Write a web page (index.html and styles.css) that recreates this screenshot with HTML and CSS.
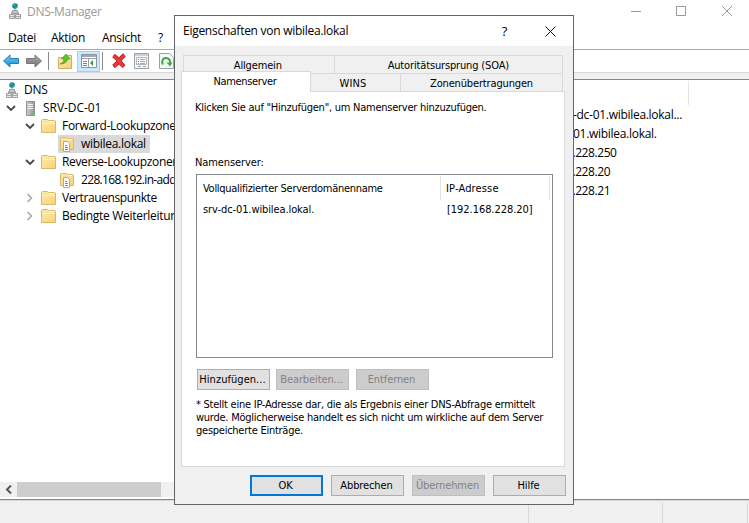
FILE: index.html
```html
<!DOCTYPE html>
<html lang="de">
<head>
<meta charset="utf-8">
<title>DNS-Manager</title>
<link rel="stylesheet" href="styles.css">
</head>
<body>
<svg width="0" height="0" class="defs">
  <defs>
    <linearGradient id="gold" x1="0" y1="0" x2="1" y2="1"><stop offset="0" stop-color="#ffeaaa"/><stop offset="1" stop-color="#f5d27a"/></linearGradient>
    <linearGradient id="steel" x1="0" y1="0" x2="1" y2="0"><stop offset="0" stop-color="#c9ced1"/><stop offset="1" stop-color="#8f969a"/></linearGradient>
    <linearGradient id="blue" x1="0" y1="0" x2="0" y2="1"><stop offset="0" stop-color="#6fd0f5"/><stop offset="1" stop-color="#1787d4"/></linearGradient>
    <linearGradient id="grey" x1="0" y1="0" x2="0" y2="1"><stop offset="0" stop-color="#aaa"/><stop offset="1" stop-color="#747474"/></linearGradient>
    <symbol id="dns" viewBox="0 0 12 16">
      <path d="M6 5v5M2.500 12V9.500h7V12" fill="none" stroke="#9a9ea2"/>
      <circle cx="6" cy="3" r="2.800" fill="#167fa9"/><path d="M4 1.200q2-1.400 3 .2L5.500 3 4 2.500zM6 4l2-1v1.500L6.500 5.700z" fill="#35b66a"/>
      <path d="M3.500 7.500h5v3h-5zM.5 11.500h5v4h-5zM6.500 11.500h5v4h-5z" fill="#e6e8ea" stroke="#9a9fa4"/>
      <path d="M1 13.500h4M7 13.500h4M4 9h4" stroke="#a4a9ad"/>
    </symbol>
    <symbol id="folder" viewBox="0 0 15 14">
      <path d="M.5 1.500q0-1 1-1h5l1 1h6q1 0 1 1v11H.5z" fill="url(#gold)" stroke="#dcb766"/>
      <path d="M8 2.500h5" stroke="#fffdf2"/><path d="M1 4.500h13" stroke="#fff1c0"/>
    </symbol>
    <symbol id="zone" viewBox="0 0 15 15">
      <path d="M.5 1.500q0-1 1-1h5l1 1h5q1 0 1 1v10H.5z" fill="url(#gold)" stroke="#dcb766"/>
      <path d="M8 2.500h4" stroke="#fffdf2"/>
      <path d="M3.500 4.500h4l2 2v8h-6z" fill="#fff" stroke="#a3abb2"/>
      <path d="M5 8.500h2M5 10.500h3M5 12.500h3" stroke="#4d8fc4"/>
    </symbol>
    <symbol id="open" viewBox="0 0 10 7"><path d="M1 1l4 4 4-4" fill="none" stroke="#484848" stroke-width="1.800"/></symbol>
    <symbol id="closed" viewBox="0 0 7 10"><path d="M1 1l4 4-4 4" fill="none" stroke="#a6a6a6" stroke-width="1.500"/></symbol>
  </defs>
</svg>
<div class="window">
  <header class="titlebar">
    <svg class="app-icon" width="12" height="16"><use href="#dns"/></svg>
    <span class="app-title">DNS-Manager</span>
    <svg class="controls" width="102" height="12" fill="none" stroke="#999"><path d="M0 6.500h10M45.500 1.500h9v9h-9zM91 1l10 10M101 1L91 11"/></svg>
  </header>
  <nav class="menu"><span class="m1">Datei</span><span class="m2">Aktion</span><span class="m3">Ansicht</span><span>?</span></nav>
  <div class="toolbar">
    <svg width="16" height="14"><path d="M.5 7L7 1v3.500h8.500v5H7V13z" fill="url(#blue)" stroke="#247eb4"/></svg>
    <svg class="t2" width="16" height="14"><path d="M15.500 7L9 1v3.500H.5v5H9V13z" fill="url(#grey)" stroke="#777"/></svg>
    <i class="sep"></i>
    <svg class="t3" width="14" height="16"><path d="M.5 4.500h7l1-2h5v13H.5z" fill="url(#gold)" stroke="#d3ae58"/><path d="M2 11c3-1 4-3 4-5H3.500L8 1l4 5H9.500c0 3-3 5-7.500 5z" fill="#62c331" stroke="#41982a" stroke-width=".7"/></svg>
    <span class="pressed"><svg width="16" height="14"><path d="M.5.5h15v13H.5z" fill="#fff" stroke="#8d969e"/><path d="M1 2h14" stroke="#a0a8b0" stroke-width="2"/><path d="M1 4.500h14M7.500 5v8" stroke="#9ba4ab"/><path d="M2 7.500h4M2 9.500h4M2 11.500h4" stroke="#71869a"/><path d="M12 6v6L9 9z" fill="#2aa337"/></svg></span>
    <i class="sep near"></i>
    <svg class="t4" width="16" height="16"><path d="M2.500 2.500Q6 5 8 8q2 3 5 5.500M13.500 2Q10 4.500 8 8q-2 3-5.500 5.500" fill="none" stroke="#b31f23" stroke-width="4.200"/><path d="M2.500 2.500Q6 5 8 8q2 3 5 5.500M13.500 2Q10 4.500 8 8q-2 3-5.500 5.500" fill="none" stroke="#ee3737" stroke-width="2.700"/></svg>
    <svg class="t5" width="15" height="16"><path d="M.5.5h14v15H.5z" fill="#f4f6f8" stroke="#9aa2a9"/><path d="M1 2h13" stroke="#ccd1d5" stroke-width="2"/><path d="M2.500 4.500h10v7h-10z" fill="#fff" stroke="#b0b7bd"/><path d="M4 6.500h1M4 8.500h1M4 10.500h1" stroke="#2f98ca"/><path d="M6 6.500h5M6 8.500h5M6 10.500h5M4 13.500h3M9 13.500h3" stroke="#9aabba"/></svg>
    <svg class="t6" width="15" height="16"><path d="M.5.5h10l4 4v11H.5z" fill="#f5f7f8" stroke="#9aa2a9"/><path d="M4 11.500a4 4 0 1 1 7-1.500" fill="none" stroke="#3aab3c" stroke-width="2"/><path d="M7.500 9.500h6L11 13.500z" fill="#3aab3c"/></svg>
  </div>
  <div class="band"></div>
  <main class="panes">
    <section class="left">
      <ul class="tree">
        <li class="root"><svg width="12" height="16"><use href="#dns"/></svg><span>DNS</span></li>
        <li class="server"><svg width="10" height="7"><use href="#open"/></svg><svg class="box" width="9" height="15"><path d="M.5.5h8v14h-8z" fill="url(#steel)" stroke="#8c9397"/><path d="M2 3.500h5M2 5.500h5M2 7.500h5" stroke="#f2f4f5"/><path d="M5 13h3" stroke="#40e22e" stroke-width="2"/></svg><span>SRV-DC-01</span></li>
        <li class="zone"><svg class="chev" width="10" height="7"><use href="#open"/></svg><svg width="15" height="14"><use href="#folder"/></svg><span>Forward-Lookupzone</span></li>
        <li class="leaf"><div class="chosen"><svg width="15" height="15"><use href="#zone"/></svg><span>wibilea.lokal</span></div></li>
        <li class="zone"><svg class="chev" width="10" height="7"><use href="#open"/></svg><svg width="15" height="14"><use href="#folder"/></svg><span class="rev">Reverse-Lookupzonen</span></li>
        <li class="leaf"><div><svg width="15" height="15"><use href="#zone"/></svg><span class="arpa">228.168.192.in-add</span></div></li>
        <li class="zone"><svg class="chev" width="10" height="10"><use href="#closed"/></svg><svg width="15" height="14"><use href="#folder"/></svg><span class="vp">Vertrauenspunkte</span></li>
        <li class="zone"><svg class="chev" width="10" height="10"><use href="#closed"/></svg><svg width="15" height="14"><use href="#folder"/></svg><span>Bedingte Weiterleitun</span></li>
      </ul>
      <div class="scroll"><svg width="7" height="9"><path d="M6 .5l-4 4 4 4" fill="none" stroke="#555" stroke-width="2"/></svg><i></i></div>
    </section>
    <section class="right">
      <div class="colhead"></div>
      <ul class="records"><li>-dc-01.wibilea.lokal...</li><li>01.wibilea.lokal.</li><li class="ip">8.228.250</li><li class="ip">8.228.20</li><li class="ip">8.228.21</li></ul>
    </section>
  </main>
  <footer class="status"><i></i><i></i><i></i></footer>
</div>

<div class="dialog">
  <header class="dlg-title"><span>Eigenschaften von wibilea.lokal</span><b>?</b><svg width="11" height="11"><path d="M.5.5l10 10M10.500.5l-10 10" stroke="#111" fill="none"/></svg></header>
  <div class="tabs">
    <div class="row back"><span class="tab-a">Allgemein</span><span class="tab-soa">Autoritätsursprung (SOA)</span></div>
    <div class="row front"><span class="active">Namenserver</span><span class="tab-wins">WINS</span><span class="tab-z">Zonenübertragungen</span></div>
  </div>
  <div class="page">
    <p class="hint">Klicken Sie auf "Hinzufügen", um Namenserver hinzuzufügen.</p>
    <p class="label">Namenserver:</p>
    <div class="list">
      <div class="head"><span class="fqdn">Vollqualifizierter Serverdomänenname</span><span class="ipcol">IP-Adresse</span></div>
      <div class="item"><span class="host">srv-dc-01.wibilea.lokal.</span><span class="addr">[192.168.228.20]</span></div>
    </div>
    <div class="actions"><button class="add">Hinzufügen...</button><button class="edit" disabled>Bearbeiten...</button><button class="rem" disabled>Entfernen</button></div>
    <p class="note"><span>* Stellt eine IP-Adresse dar, die als Ergebnis einer DNS-Abfrage ermittelt</span><br><span>wurde. Möglicherweise handelt es sich nicht um wirkliche auf dem Server</span><br><span>gespeicherte Einträge.</span></p>
  </div>
  <footer class="buttons"><button class="ok">OK</button><button>Abbrechen</button><button disabled>Übernehmen</button><button>Hilfe</button></footer>
</div>
</body>
</html>
```
FILE: styles.css
```css
* { box-sizing: border-box; }
body { margin: 0; width: 749px; height: 523px; overflow: hidden; position: relative; background: #fff; color: #000; font: 12px/18px "Open Sans", "Noto Sans", sans-serif; letter-spacing: -0.29px; }
ul, p { margin: 0; padding: 0; list-style: none; }
svg { flex: none; display: block; }
span { white-space: nowrap; }
.defs { position: absolute; }
.window { display: flex; flex-direction: column; height: 523px; }
.titlebar { display: flex; align-items: center; height: 24px; padding-left: 9px; color: #999; }
.app-icon { margin-top: -2px; }
.app-title { margin-left: 6px; }
.controls { margin-left: auto; margin-right: 16px; margin-top: -2px; }
.menu { display: flex; height: 25px; padding: 5px 0 0 8px; }
.m1 { width: 43px; }
.m2 { width: 51px; }
.m3 { width: 56px; }
.toolbar { display: flex; align-items: center; height: 24px; padding-left: 3px; border-top: 1px solid #a9a9b3; border-bottom: 1px solid #d8d8d8; }
.t2 { margin-left: 7px; }
.sep { width: 1px; height: 18px; margin-left: 6px; background: #8b8b8b; }
.t3 { margin-left: 9px; }
.pressed { display: flex; align-items: center; justify-content: center; width: 23px; height: 21px; margin-left: 5px; background: #cce8ff; border: 1px solid #99d1ff; }
.sep.near { margin-left: 2px; }
.t4 { margin-left: 8px; }
.t5 { margin-left: 7px; }
.t6 { margin-left: 10px; }
.band { height: 6px; background: #f0f0f0; }
.panes { display: flex; height: 421px; border-top: 1px solid #828790; border-bottom: 1px solid #828790; }
.left { display: flex; flex-direction: column; width: 174px; overflow: hidden; }
.tree { flex: 1; padding-top: 1px; }
.tree li { display: flex; align-items: center; height: 18px; }
.root { padding-left: 6px; }
.root span { margin-left: 6px; }
.server { padding-left: 6px; }
.box { margin-left: 10px; }
.server span { margin-left: 8px; letter-spacing: -0.05px; }
.zone { padding-left: 25px; }
.chev { margin-right: 6px; }
.zone span { margin-left: 6px; }
.zone .rev { letter-spacing: -0.36px; }
.zone .vp { letter-spacing: -0.4px; }
.leaf { padding-left: 58px; }
.leaf div { display: flex; align-items: center; height: 18px; padding: 0 4px 0 2px; }
.leaf span { margin-left: 6px; }
.leaf .arpa { letter-spacing: -0.66px; }
.leaf .chosen { width: 92px; background: #d9d9d9; }
.scroll { display: flex; align-items: center; height: 15px; margin-bottom: 2px; padding-left: 5px; background: #f0f0f0; }
.scroll i { width: 144px; height: 15px; margin-left: 5px; background: #cdcdcd; }
.right { width: 175px; margin-left: 399px; }
.colhead { width: 116px; height: 24px; margin-top: 1px; border-right: 1px solid #e5e5e5; }
.records li { height: 19px; line-height: 19px; white-space: nowrap; }
.records .ip { margin-left: -7px; letter-spacing: -0.42px; }
.status { display: flex; justify-content: flex-end; height: 23px; padding-top: 2px; background: #f0f0f0; border-top: 1px solid #d7d7d7; }
.status i { width: 85px; height: 20px; border-right: 1px solid #d7d7d7; }
.status i:first-child { width: 1px; }
.status i:nth-child(2) { width: 134px; }
.status i:last-child { margin-right: 1px; }

.dialog { position: absolute; left: 174px; top: 15px; display: flex; flex-direction: column; width: 400px; height: 490px; background: #f0f0f0; border: 1px solid #646464; font: 11px/13px "DejaVu Sans Condensed", "DejaVu Sans", sans-serif; letter-spacing: -0.25px; }
.dlg-title { display: flex; align-items: center; height: 30px; padding: 0 17px 0 8px; background: #fff; font: 12px/18px "Open Sans", "Noto Sans", sans-serif; letter-spacing: -0.27px; }
.dlg-title b { margin: 0 38px 0 auto; font-weight: 400; font-size: 13px; }
.tabs { position: relative; z-index: 1; padding: 9px 10px 0 6px; letter-spacing: -0.15px; }
.row { display: flex; height: 18px; }
.row span { text-align: center; }
.back { margin-left: 2px; border: 1px solid #d9d9d9; border-bottom: 0; }
.back span { padding-top: 3px; }
.tab-a { width: 151px; padding-right: 2px; border-right: 1px solid #d9d9d9; }
.tab-soa { width: 228px; }
.front span { height: 19px; padding-top: 3px; border: 1px solid #d9d9d9; border-left: 0; }
.front .active { width: 130px; height: 21px; margin-top: -2px; padding: 3px 2px 0 0; background: #fff; border-left: 1px solid #d9d9d9; border-bottom: 0; letter-spacing: -0.35px; }
.front .tab-wins { width: 90px; padding-right: 5px; letter-spacing: 0.2px; }
.tab-z { flex: 1; }
.page { width: 384px; height: 376px; margin-left: 6px; padding: 9px 0 0 14px; background: #fff; border: 1px solid #d9d9d9; }
.hint, .label { margin-left: -1px; }
.label { padding-top: 42px; letter-spacing: -0.1px; }
.list { width: 357px; height: 184px; margin: 5px 0 0 0; padding: 1px 2px 0 6px; border: 1px solid #828790; }
.head { display: flex; height: 24px; line-height: 25px; letter-spacing: -0.29px; }
.fqdn { width: 238px; border-right: 1px solid #e5e5e5; }
.ipcol { width: 109px; padding-left: 5px; border-right: 1px solid #e5e5e5; letter-spacing: 0.15px; }
.item { display: flex; line-height: 20px; letter-spacing: -0.1px; }
.host { width: 244px; }
.addr { letter-spacing: -0.05px; }
.actions { display: flex; gap: 7px; margin: 11px 0 0 1px; }
button { width: 73px; height: 21px; padding: 0 2px 0 0; color: #000; background: #e1e1e1; border: 1px solid #adadad; font: inherit; letter-spacing: -0.1px; white-space: nowrap; }
button:disabled { color: #838383; background: #ccc; border-color: #bfbfbf; }
.add { letter-spacing: 0.05px; }
.edit { margin-left: -1px; }
.note { margin-top: 8px; }
.buttons { display: flex; justify-content: flex-end; gap: 8px; margin: 8px 7px 0 0; }
.ok { border: 2px solid #0078d7; }
```
